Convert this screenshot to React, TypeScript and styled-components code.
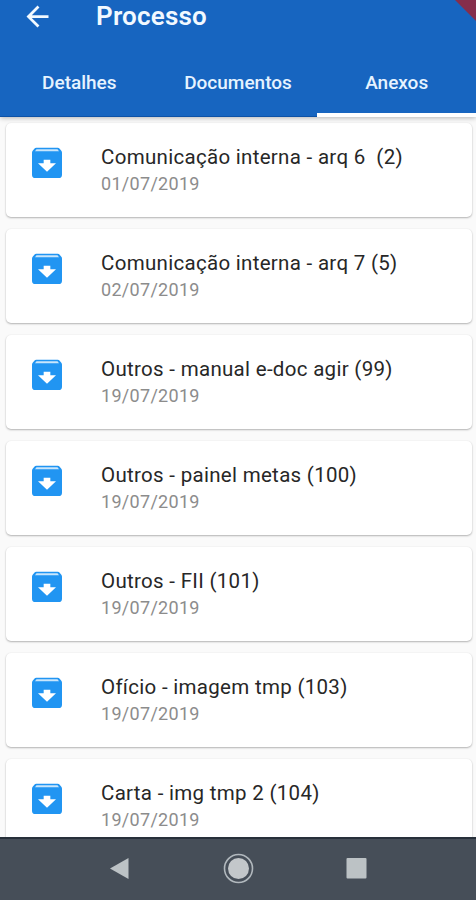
import React from "react";
import styled, { createGlobalStyle } from "styled-components";

const GlobalStyle = createGlobalStyle`
  * { box-sizing: border-box; }
  body { margin: 0; background: #fafafa; font-family: Roboto, "Liberation Sans", sans-serif; }
`;

const Screen = styled.div`
  position: relative;
  display: flex;
  flex-direction: column;
  width: 476px;
  height: 900px;
  overflow: hidden;
  background: #fafafa;
`;

const Header = styled.header`
  position: relative;
  z-index: 1;
  flex: none;
  height: 117px;
  display: flex;
  flex-direction: column;
  justify-content: space-between;
  background: #1765c0;
  border-bottom: 1px solid #0d52a6;
  box-shadow: 0 1px 5px rgba(0, 0, 0, 0.28);
`;

const TitleBar = styled.div`
  display: flex;
  align-items: center;
  height: 32px;
  padding-left: 21px;
  gap: 42px;
`;

const BackIcon = styled.svg`
  width: 33px;
  height: 33px;
  fill: #f2f9ff;
`;

const Title = styled.h1`
  margin: 0;
  font-size: 26px;
  line-height: 32px;
  font-weight: 600;
  letter-spacing: 0.2px;
  color: #f2f9ff;
`;

const Tabs = styled.nav`
  display: grid;
  grid-template-columns: repeat(3, 1fr);
  height: 67px;
  margin-bottom: -1px;
`;

const Tab = styled.div<{ $active?: boolean }>`
  display: flex;
  justify-content: center;
  padding-top: 21px;
  font-size: 19px;
  line-height: 24px;
  font-weight: 500;
  color: #e6f3ff;
  border-bottom: ${(p) => (p.$active ? "4px solid #fff" : "none")};
`;

const DebugRibbon = styled.svg`
  position: absolute;
  top: 0;
  right: 0;
  width: 24px;
  height: 24px;
`;

const List = styled.main`
  flex: 1;
  min-height: 0;
  overflow: hidden;
  display: flex;
  flex-direction: column;
  gap: 12px;
  padding: 6px 4px 0 6px;
`;

const Card = styled.article`
  flex: none;
  display: flex;
  height: 94px;
  padding: 20px 0 0 21px;
  gap: 34px;
  background: #fff;
  border-radius: 5px;
  box-shadow: 0 1px 2px rgba(0, 0, 0, 0.28), 0 0 2px rgba(0, 0, 0, 0.06);
`;

const ArchiveIcon = styled.svg`
  flex: none;
  width: 40px;
  height: 40px;
`;

const CardText = styled.div`
  padding-top: 1px;
`;

const Name = styled.div`
  font-size: 20.5px;
  line-height: 27px;
  letter-spacing: 0.3px;
  white-space: pre;
  color: #272727;
`;

const DateText = styled.div`
  font-size: 18px;
  line-height: 25px;
  letter-spacing: 0.3px;
  color: #8c8c8c;
`;

const SystemBar = styled.footer`
  flex: none;
  height: 63px;
  border-top: 2px solid #27303a;
  background: #464e58;
`;

const SystemIcons = styled.svg`
  display: block;
  width: 476px;
  height: 61px;
`;

const items = [
  { name: "Comunicação interna - arq 6  (2)", date: "01/07/2019" },
  { name: "Comunicação interna - arq 7 (5)", date: "02/07/2019" },
  { name: "Outros - manual e-doc agir (99)", date: "19/07/2019" },
  { name: "Outros - painel metas (100)", date: "19/07/2019" },
  { name: "Outros - FII (101)", date: "19/07/2019" },
  { name: "Ofício - imagem tmp (103)", date: "19/07/2019" },
  { name: "Carta - img tmp 2 (104)", date: "19/07/2019" },
];

const Archive = () => (
  <ArchiveIcon viewBox="0 0 24 24">
    <path
      fill="#2195f2"
      d="M5.6 2.8h12.8c.5 0 .9.2 1.2.6l1 1.3c.3.3.4.7.4 1.2V19a2 2 0 0 1-2 2H5a2 2 0 0 1-2-2V5.9c0-.5.1-.9.4-1.2l1-1.3c.3-.4.7-.6 1.2-.6z"
    />
    <path fill="#c9e6fc" d="M5.7 3.7h12.6l.9 1.3H4.8z" />
    <path fill="#fff" d="M12 17.3 6.6 12.2H10V10h4v2.2h3.4z" />
  </ArchiveIcon>
);

export default function App() {
  return (
    <>
      <GlobalStyle />
      <Screen>
        <Header>
          <TitleBar>
            <BackIcon viewBox="0 0 24 24">
              <path d="M20 11H7.83l5.59-5.59L12 4l-8 8 8 8 1.41-1.41L7.83 13H20z" />
            </BackIcon>
            <Title>Processo</Title>
          </TitleBar>
          <Tabs>
            <Tab>Detalhes</Tab>
            <Tab>Documentos</Tab>
            <Tab $active>Anexos</Tab>
          </Tabs>
          <DebugRibbon viewBox="0 0 24 24">
            <path d="M3 0H24V21z" fill="#852e4c" />
          </DebugRibbon>
        </Header>
        <List>
          {items.map((item) => (
            <Card key={item.name}>
              <Archive />
              <CardText>
                <Name>{item.name}</Name>
                <DateText>{item.date}</DateText>
              </CardText>
            </Card>
          ))}
        </List>
        <SystemBar>
          <SystemIcons viewBox="0 0 476 61">
            <path d="M110 29.5 128.5 19v21z" fill="#bcc2c5" />
            <circle cx="238.5" cy="29.5" r="14" fill="none" stroke="#b1b8bd" strokeWidth="1.6" />
            <circle cx="238.5" cy="29.5" r="10.5" fill="#c3c7ca" />
            <rect x="346.5" y="19" width="20" height="20.5" rx="1" fill="#bcc2c5" />
          </SystemIcons>
        </SystemBar>
      </Screen>
    </>
  );
}
